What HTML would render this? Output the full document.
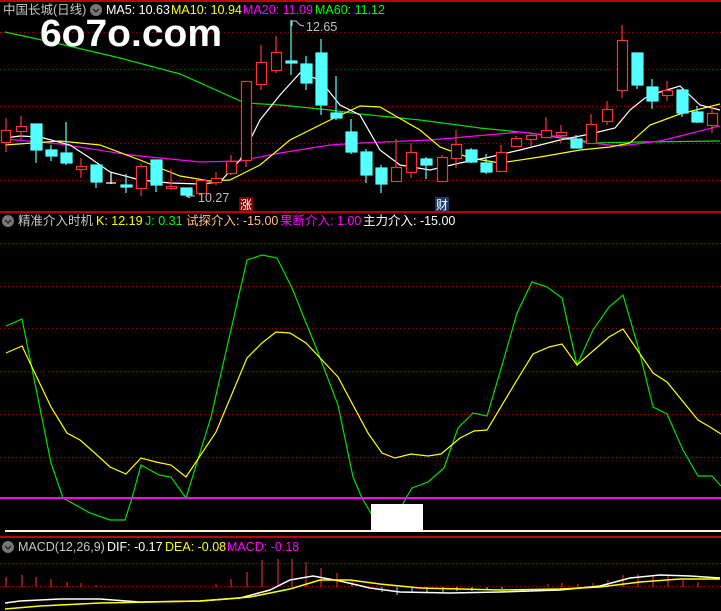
<!DOCTYPE html>
<html><head><meta charset="utf-8"><style>
html,body{margin:0;padding:0;background:#000;width:721px;height:611px;overflow:hidden}
svg{display:block}
text{font-family:"Liberation Sans","Noto Sans CJK SC",sans-serif;font-size:12.5px}
</style></head><body>
<svg width="721" height="611" viewBox="0 0 721 611" xmlns="http://www.w3.org/2000/svg">
<rect width="721" height="611" fill="#000"/>
<rect x="0" y="0" width="721" height="2" fill="#c00000"/>
<rect x="0" y="211" width="721" height="2" fill="#c00000"/>
<rect x="0" y="536" width="721" height="2" fill="#c00000"/>
<g stroke="#a00000" stroke-dasharray="1,3" stroke-width="1">
<line x1="0" y1="32.5" x2="721" y2="32.5"/><line x1="0" y1="69.5" x2="721" y2="69.5"/><line x1="0" y1="106.5" x2="721" y2="106.5"/><line x1="0" y1="143.5" x2="721" y2="143.5"/><line x1="0" y1="180.5" x2="721" y2="180.5"/>
<line x1="0" y1="243.5" x2="721" y2="243.5"/><line x1="0" y1="286.5" x2="721" y2="286.5"/><line x1="0" y1="328.5" x2="721" y2="328.5"/><line x1="0" y1="371.5" x2="721" y2="371.5"/><line x1="0" y1="414.5" x2="721" y2="414.5"/><line x1="0" y1="457.5" x2="721" y2="457.5"/>
<line x1="0" y1="563.5" x2="721" y2="563.5"/><line x1="0" y1="586.5" x2="721" y2="586.5"/>
</g>
<polyline fill="none" stroke="#00e000" stroke-width="1.2" points="5,32 60,44 120,58 180,74 245,103 280,105 330,110 360,114 420,120 480,128 530,133 590,143 640,142 720,141"/>
<polyline fill="none" stroke="#ff00ff" stroke-width="1.2" points="5,139 60,144 130,155 200,162 240,161 280,153 330,145 360,143 430,140 520,132 570,138 600,144 620,146 660,141 720,126"/>
<polyline fill="none" stroke="#ffff00" stroke-width="1.2" points="5,145 60,141 100,145 140,160 180,176 210,181 230,180 260,165 290,140 330,120 360,106 380,107 420,130 440,147 470,158 500,163 540,157 580,150 610,147 630,143 650,125 680,114 720,104"/>
<polyline fill="none" stroke="#ffffff" stroke-width="1.2" points="5,138 20,136 40,137 70,145 90,158 110,172 140,180 170,183 200,184 220,182 240,160 260,120 280,95 300,73 320,80 340,105 360,115 380,150 400,165 430,170 460,163 490,157 520,150 560,140 590,134 615,128 630,110 645,98 660,92 680,86 700,105 720,110"/>
<g stroke="#ff3232" stroke-width="1.2" fill="#000">
<line x1="6" y1="118" x2="6" y2="152"/><rect x="1.5" y="130.5" width="9" height="12"/>
<line x1="21" y1="116" x2="21" y2="140"/><rect x="16.5" y="126.5" width="10" height="5"/>
<line x1="81" y1="158" x2="81" y2="178"/><rect x="76.5" y="166.5" width="10" height="3"/>
<line x1="141" y1="164" x2="141" y2="196"/><rect x="136.5" y="166.5" width="10" height="22"/>
<line x1="171" y1="169" x2="171" y2="190"/><rect x="166.5" y="186.5" width="10" height="2"/>
<rect x="196.5" y="180.5" width="10" height="13"/>
<line x1="216" y1="172" x2="216" y2="185"/><rect x="211.5" y="178.5" width="10" height="4"/>
<line x1="231" y1="155" x2="231" y2="175"/><rect x="226.5" y="161.5" width="10" height="12"/>
<line x1="246" y1="81" x2="246" y2="167"/><rect x="241.5" y="81.5" width="10" height="79"/>
<line x1="261" y1="45" x2="261" y2="90"/><rect x="256.5" y="62.5" width="10" height="22"/>
<line x1="276" y1="36" x2="276" y2="73"/><rect x="271.5" y="52.5" width="10" height="18"/>
<line x1="396" y1="139" x2="396" y2="182"/><rect x="391.5" y="167.5" width="10" height="14"/>
<line x1="411" y1="143" x2="411" y2="178"/><rect x="406.5" y="152.5" width="10" height="20"/>
<line x1="442" y1="155" x2="442" y2="182"/><rect x="437.5" y="157.5" width="10" height="24"/>
<line x1="456" y1="130" x2="456" y2="168"/><rect x="451.5" y="144.5" width="10" height="14"/>
<line x1="501" y1="145" x2="501" y2="172"/><rect x="496.5" y="152.5" width="10" height="19"/>
<line x1="516" y1="136" x2="516" y2="146"/><rect x="511.5" y="138.5" width="10" height="8"/>
<line x1="531" y1="133" x2="531" y2="146"/><rect x="526.5" y="135.5" width="10" height="4"/>
<line x1="546" y1="117" x2="546" y2="138"/><rect x="541.5" y="130.5" width="10" height="7"/>
<line x1="561" y1="125" x2="561" y2="143"/><rect x="556.5" y="132.5" width="10" height="3"/>
<line x1="591" y1="114" x2="591" y2="143"/><rect x="586.5" y="124.5" width="10" height="19"/>
<line x1="607" y1="101" x2="607" y2="125"/><rect x="602.5" y="109.5" width="10" height="12"/>
<line x1="622" y1="25" x2="622" y2="98"/><rect x="617.5" y="40.5" width="10" height="50"/>
<line x1="667" y1="81" x2="667" y2="101"/><rect x="662.5" y="90.5" width="10" height="5"/>
<line x1="712" y1="106" x2="712" y2="133"/><rect x="707.5" y="113.5" width="10" height="12"/>
</g>
<g stroke="#54ffff" stroke-width="1.2" fill="#54ffff">
<line x1="36" y1="124" x2="36" y2="163"/><rect x="31" y="124" width="11" height="26"/>
<line x1="51" y1="145" x2="51" y2="161"/><rect x="46" y="150" width="11" height="6"/>
<line x1="66" y1="122" x2="66" y2="165"/><rect x="61" y="153" width="11" height="10"/>
<line x1="96" y1="165" x2="96" y2="188"/><rect x="91" y="165" width="11" height="17"/>
<line x1="126" y1="174" x2="126" y2="193"/><rect x="121" y="185" width="11" height="2"/>
<line x1="156" y1="160" x2="156" y2="192"/><rect x="151" y="160" width="11" height="25"/>
<rect x="181" y="188" width="11" height="7"/>
<line x1="291" y1="20" x2="291" y2="75"/><rect x="286" y="61" width="11" height="2"/>
<line x1="306" y1="56" x2="306" y2="90"/><rect x="301" y="64" width="11" height="19"/>
<line x1="321" y1="39" x2="321" y2="115"/><rect x="316" y="53" width="11" height="52"/>
<line x1="336" y1="76" x2="336" y2="120"/><rect x="331" y="113" width="11" height="5"/>
<line x1="351" y1="119" x2="351" y2="154"/><rect x="346" y="132" width="11" height="20"/>
<line x1="366" y1="149" x2="366" y2="183"/><rect x="361" y="152" width="11" height="23"/>
<line x1="381" y1="165" x2="381" y2="193"/><rect x="376" y="168" width="11" height="16"/>
<line x1="426" y1="157" x2="426" y2="179"/><rect x="421" y="159" width="11" height="6"/>
<line x1="471" y1="148" x2="471" y2="163"/><rect x="466" y="150" width="11" height="12"/>
<line x1="486" y1="154" x2="486" y2="174"/><rect x="481" y="163" width="11" height="9"/>
<line x1="576" y1="135" x2="576" y2="148"/><rect x="571" y="139" width="11" height="9"/>
<line x1="637" y1="53" x2="637" y2="89"/><rect x="632" y="53" width="11" height="32"/>
<line x1="652" y1="79" x2="652" y2="109"/><rect x="647" y="87" width="11" height="14"/>
<line x1="682" y1="89" x2="682" y2="117"/><rect x="677" y="90" width="11" height="23"/>
<line x1="697" y1="106" x2="697" y2="123"/><rect x="692" y="112" width="11" height="10"/>
</g>
<g stroke="#fff" stroke-width="1.2"><line x1="106" y1="183" x2="116" y2="183"/><line x1="111" y1="172" x2="111" y2="184"/></g>
<polyline fill="none" stroke="#c0c0c0" points="292,26 292,21 296,21 300,25 304,26"/>
<text x="306" y="31" fill="#c0c0c0">12.65</text>
<polyline fill="none" stroke="#c0c0c0" points="190,198 186,196 195,196"/>
<text x="198" y="202" fill="#c0c0c0">10.27</text>
<rect x="239" y="197" width="14" height="14" fill="#800000"/>
<text x="240" y="209" fill="#fff" style="font-size:12px">涨</text>
<rect x="435" y="197" width="14" height="14" fill="#1a3a6a"/>
<text x="436" y="209" fill="#fff" style="font-size:12px">财</text>
<text x="40" y="46" fill="#fff" textLength="182" lengthAdjust="spacingAndGlyphs" style="font-size:38px;font-weight:bold">6o7o.com</text>
<text x="3" y="14" fill="#c8c8c8">中国长城(日线)</text>
<circle cx="96" cy="10" r="6" fill="#777"/><polyline points="93,9 96,12 99,9" fill="none" stroke="#222" stroke-width="1.3"/>
<text x="106" y="14" fill="#fff">MA5: 10.63</text>
<text x="171" y="14" fill="#ffff00">MA10: 10.94</text>
<text x="243" y="14" fill="#ff00ff">MA20: 11.09</text>
<text x="315" y="14" fill="#00ff00">MA60: 11.12</text>
<circle cx="8" cy="221" r="6" fill="#777"/><polyline points="5,220 8,223 11,220" fill="none" stroke="#222" stroke-width="1.3"/>
<text x="18" y="225" fill="#c8c8c8">精准介入时机</text>
<text x="96" y="225" fill="#ffff00">K: 12.19</text>
<text x="145" y="225" fill="#00ff00">J: 0.31</text>
<text x="186" y="225" fill="#ffc080">试探介入: -15.00</text>
<text x="280" y="225" fill="#ff00ff">果断介入: 1.00</text>
<text x="363" y="225" fill="#fff">主力介入: -15.00</text>
<polyline fill="none" stroke="#00e000" stroke-width="1.2" points="6,326 22,319 51,463 63,498 90,513 110,520 125,520 132,498 141,465 159,475 171,477 186,498 211,417 247,260 262,255 277,258 292,288 317,350 338,405 353,477 362,498 372,515 400,510 406,498 412,488 428,482 444,468 458,428 473,413 487,416 503,362 517,313 532,282 547,287 562,298 577,365 593,330 609,307 623,295 639,350 653,407 667,414 683,450 698,476 712,476 721,486"/>
<polyline fill="none" stroke="#ffff00" stroke-width="1.2" points="6,353 22,346 51,407 67,433 80,440 97,455 110,467 126,474 141,458 156,462 171,465 186,477 216,432 247,358 262,343 276,332 290,333 306,343 322,360 338,377 368,433 382,453 395,458 411,454 428,456 441,454 460,438 474,431 487,430 517,380 533,354 549,347 562,344 577,365 609,337 623,329 653,373 667,382 698,420 710,427 721,434"/>
<rect x="0" y="497" width="721" height="2" fill="#ff00ff"/>
<rect x="5" y="530" width="716" height="2" fill="#fff0dc"/>
<rect x="371" y="504" width="52" height="28" fill="#fff"/>
<circle cx="8" cy="547" r="6" fill="#777"/><polyline points="5,546 8,549 11,546" fill="none" stroke="#222" stroke-width="1.3"/>
<text x="18" y="551" fill="#c8c8c8">MACD(12,26,9)</text>
<text x="107" y="551" fill="#fff">DIF: -0.17</text>
<text x="165" y="551" fill="#ffff00">DEA: -0.08</text>
<text x="227" y="551" fill="#ff00ff">MACD: -0.18</text>
<g stroke="#ff3232" stroke-width="1">
<line x1="6" y1="587" x2="6" y2="577"/><line x1="22" y1="587" x2="22" y2="575"/><line x1="36" y1="587" x2="36" y2="577"/><line x1="51" y1="587" x2="51" y2="579"/><line x1="67" y1="587" x2="67" y2="582"/><line x1="81" y1="587" x2="81" y2="583"/><line x1="96" y1="587" x2="96" y2="585"/>
<line x1="216" y1="587" x2="216" y2="584"/><line x1="231" y1="587" x2="231" y2="579"/><line x1="247" y1="587" x2="247" y2="572"/><line x1="262" y1="587" x2="262" y2="560"/><line x1="278" y1="587" x2="278" y2="559"/><line x1="292" y1="587" x2="292" y2="559"/><line x1="306" y1="587" x2="306" y2="562"/><line x1="321" y1="587" x2="321" y2="568"/><line x1="337" y1="587" x2="337" y2="573"/><line x1="352" y1="587" x2="352" y2="581"/>
<line x1="548" y1="587" x2="548" y2="584"/><line x1="562" y1="587" x2="562" y2="583"/><line x1="578" y1="587" x2="578" y2="584"/><line x1="593" y1="587" x2="593" y2="583"/><line x1="608" y1="587" x2="608" y2="580"/><line x1="623" y1="587" x2="623" y2="575"/><line x1="638" y1="587" x2="638" y2="574"/><line x1="653" y1="587" x2="653" y2="575"/><line x1="668" y1="587" x2="668" y2="575"/><line x1="683" y1="587" x2="683" y2="580"/><line x1="698" y1="587" x2="698" y2="582"/>
</g>
<g stroke="#54ffff" stroke-width="1">
<line x1="382" y1="587" x2="382" y2="592"/><line x1="397" y1="587" x2="397" y2="595"/><line x1="412" y1="587" x2="412" y2="593"/><line x1="427" y1="587" x2="427" y2="593"/><line x1="443" y1="587" x2="443" y2="592"/><line x1="457" y1="587" x2="457" y2="591"/><line x1="472" y1="587" x2="472" y2="591"/><line x1="487" y1="587" x2="487" y2="590"/><line x1="502" y1="587" x2="502" y2="589"/>
</g>
<polyline fill="none" stroke="#fff" stroke-width="1.5" points="5,603 20,601 60,599 100,599 140,602 200,601 240,598 270,590 290,580 313,576 340,581 370,588 400,592 450,593 500,592 560,590 600,586 630,578 660,575 690,576 720,578"/>
<polyline fill="none" stroke="#ffff00" stroke-width="1.5" points="5,609 40,606 100,603 200,601 250,597 290,589 320,580 350,580 380,584 420,588 500,590 560,589 600,587 640,582 680,579 720,579"/>
</svg>
</body></html>
